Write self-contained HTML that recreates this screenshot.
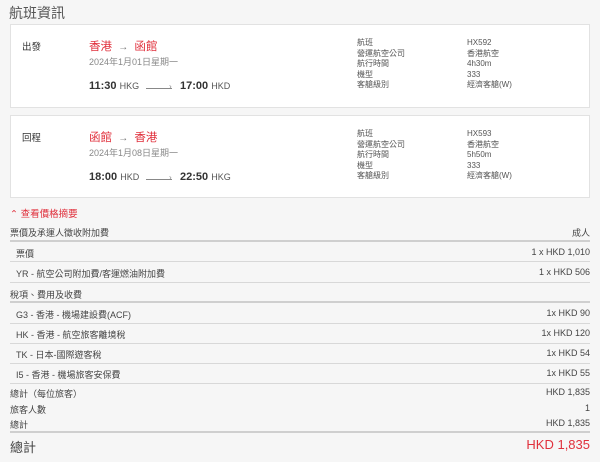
<!DOCTYPE html>
<html><head><meta charset="utf-8"><style>
*{margin:0;padding:0;box-sizing:border-box}
body{width:600px;height:462px;background:#f6f6f6;font-family:"Liberation Sans","Noto Sans CJK TC",sans-serif;color:#333;position:relative;overflow:hidden}
.a{position:absolute;white-space:nowrap}
.card{position:absolute;left:10px;width:580px;background:#fff;border:1px solid #e2e2e2}
.red{color:#e0303c}
.g{color:#888}
.s{font-size:8px;color:#555}
.line{position:absolute;left:10px;width:580px;height:1px;background:#d8d8d8}
.thick{height:2px;background:#cfcfcf}
.r{position:absolute;right:10px;white-space:nowrap;font-size:9px;color:#444}
.l{position:absolute;white-space:nowrap;font-size:9px;color:#444}
</style></head><body>
<div class="a" style="left:9px;top:3px;font-size:14px;color:#555">航班資訊</div>

<div class="card" style="top:24px;height:84px"></div>
<div class="a" style="left:22px;top:39px;font-size:9.5px;color:#333">出發</div>
<div class="a red" style="left:89px;top:38px;font-size:11.5px">香港 <span style="color:#777;font-size:10px;margin:0 3px">→</span> 函館</div>
<div class="a g" style="left:89px;top:55px;font-size:9px">2024年1月01日星期一</div>
<div class="a" style="left:89px;top:80px;font-size:11px"><b>11:30</b> <span style="font-size:9px;color:#555">HKG</span></div>
<div class="a" style="left:146px;top:88px;width:26px;height:1px;background:#888"></div>
<div class="a" style="left:169px;top:82px;font-size:8px;color:#888">›</div>
<div class="a" style="left:180px;top:80px;font-size:11px"><b>17:00</b> <span style="font-size:9px;color:#555">HKD</span></div>
<div class="a s" style="left:357px;top:38px;line-height:10.5px">航班<br>營運航空公司<br>航行時間<br>機型<br>客艙級別</div>
<div class="a s" style="left:467px;top:38px;line-height:10.5px">HX592<br>香港航空<br>4h30m<br>333<br>經濟客艙(W)</div>

<div class="card" style="top:115px;height:83px"></div>
<div class="a" style="left:22px;top:130px;font-size:9.5px;color:#333">回程</div>
<div class="a red" style="left:89px;top:129px;font-size:11.5px">函館 <span style="color:#777;font-size:10px;margin:0 3px">→</span> 香港</div>
<div class="a g" style="left:89px;top:146px;font-size:9px">2024年1月08日星期一</div>
<div class="a" style="left:89px;top:171px;font-size:11px"><b>18:00</b> <span style="font-size:9px;color:#555">HKD</span></div>
<div class="a" style="left:146px;top:179px;width:26px;height:1px;background:#888"></div>
<div class="a" style="left:169px;top:173px;font-size:8px;color:#888">›</div>
<div class="a" style="left:180px;top:171px;font-size:11px"><b>22:50</b> <span style="font-size:9px;color:#555">HKG</span></div>
<div class="a s" style="left:357px;top:129px;line-height:10.5px">航班<br>營運航空公司<br>航行時間<br>機型<br>客艙級別</div>
<div class="a s" style="left:467px;top:129px;line-height:10.5px">HX593<br>香港航空<br>5h50m<br>333<br>經濟客艙(W)</div>

<div class="a red" style="left:10px;top:206px;font-size:9.5px">⌃ 查看價格摘要</div>
<div class="l" style="left:10px;top:226px">票價及承運人徵收附加費</div>
<div class="r" style="top:226px">成人</div>
<div class="line thick" style="top:240px"></div>
<div class="l" style="left:16px;top:247px">票價</div>
<div class="r" style="top:247px">1 x HKD 1,010</div>
<div class="line" style="top:261px"></div>
<div class="l" style="left:16px;top:267px">YR - 航空公司附加費/客運燃油附加費</div>
<div class="r" style="top:267px">1 x HKD 506</div>
<div class="line" style="top:282px"></div>
<div class="l" style="left:10px;top:288px">稅項、費用及收費</div>
<div class="line thick" style="top:301px"></div>
<div class="l" style="left:16px;top:308px">G3 - 香港 - 機場建設費(ACF)</div>
<div class="r" style="top:308px">1x HKD 90</div>
<div class="line" style="top:323px"></div>
<div class="l" style="left:16px;top:328px">HK - 香港 - 航空旅客離境稅</div>
<div class="r" style="top:328px">1x HKD 120</div>
<div class="line" style="top:343px"></div>
<div class="l" style="left:16px;top:348px">TK - 日本-國際遊客稅</div>
<div class="r" style="top:348px">1x HKD 54</div>
<div class="line" style="top:363px"></div>
<div class="l" style="left:16px;top:368px">I5 - 香港 - 機場旅客安保費</div>
<div class="r" style="top:368px">1x HKD 55</div>
<div class="line" style="top:383px"></div>
<div class="l" style="left:10px;top:387px">總計（每位旅客）</div>
<div class="r" style="top:387px">HKD 1,835</div>
<div class="l" style="left:10px;top:403px">旅客人數</div>
<div class="r" style="top:403px">1</div>
<div class="l" style="left:10px;top:418px">總計</div>
<div class="r" style="top:418px">HKD 1,835</div>
<div class="line thick" style="top:431px"></div>
<div class="l" style="left:10px;top:437px;font-size:13px">總計</div>
<div class="r red" style="top:437px;font-size:13px;color:#e0303c">HKD 1,835</div>
</body></html>
